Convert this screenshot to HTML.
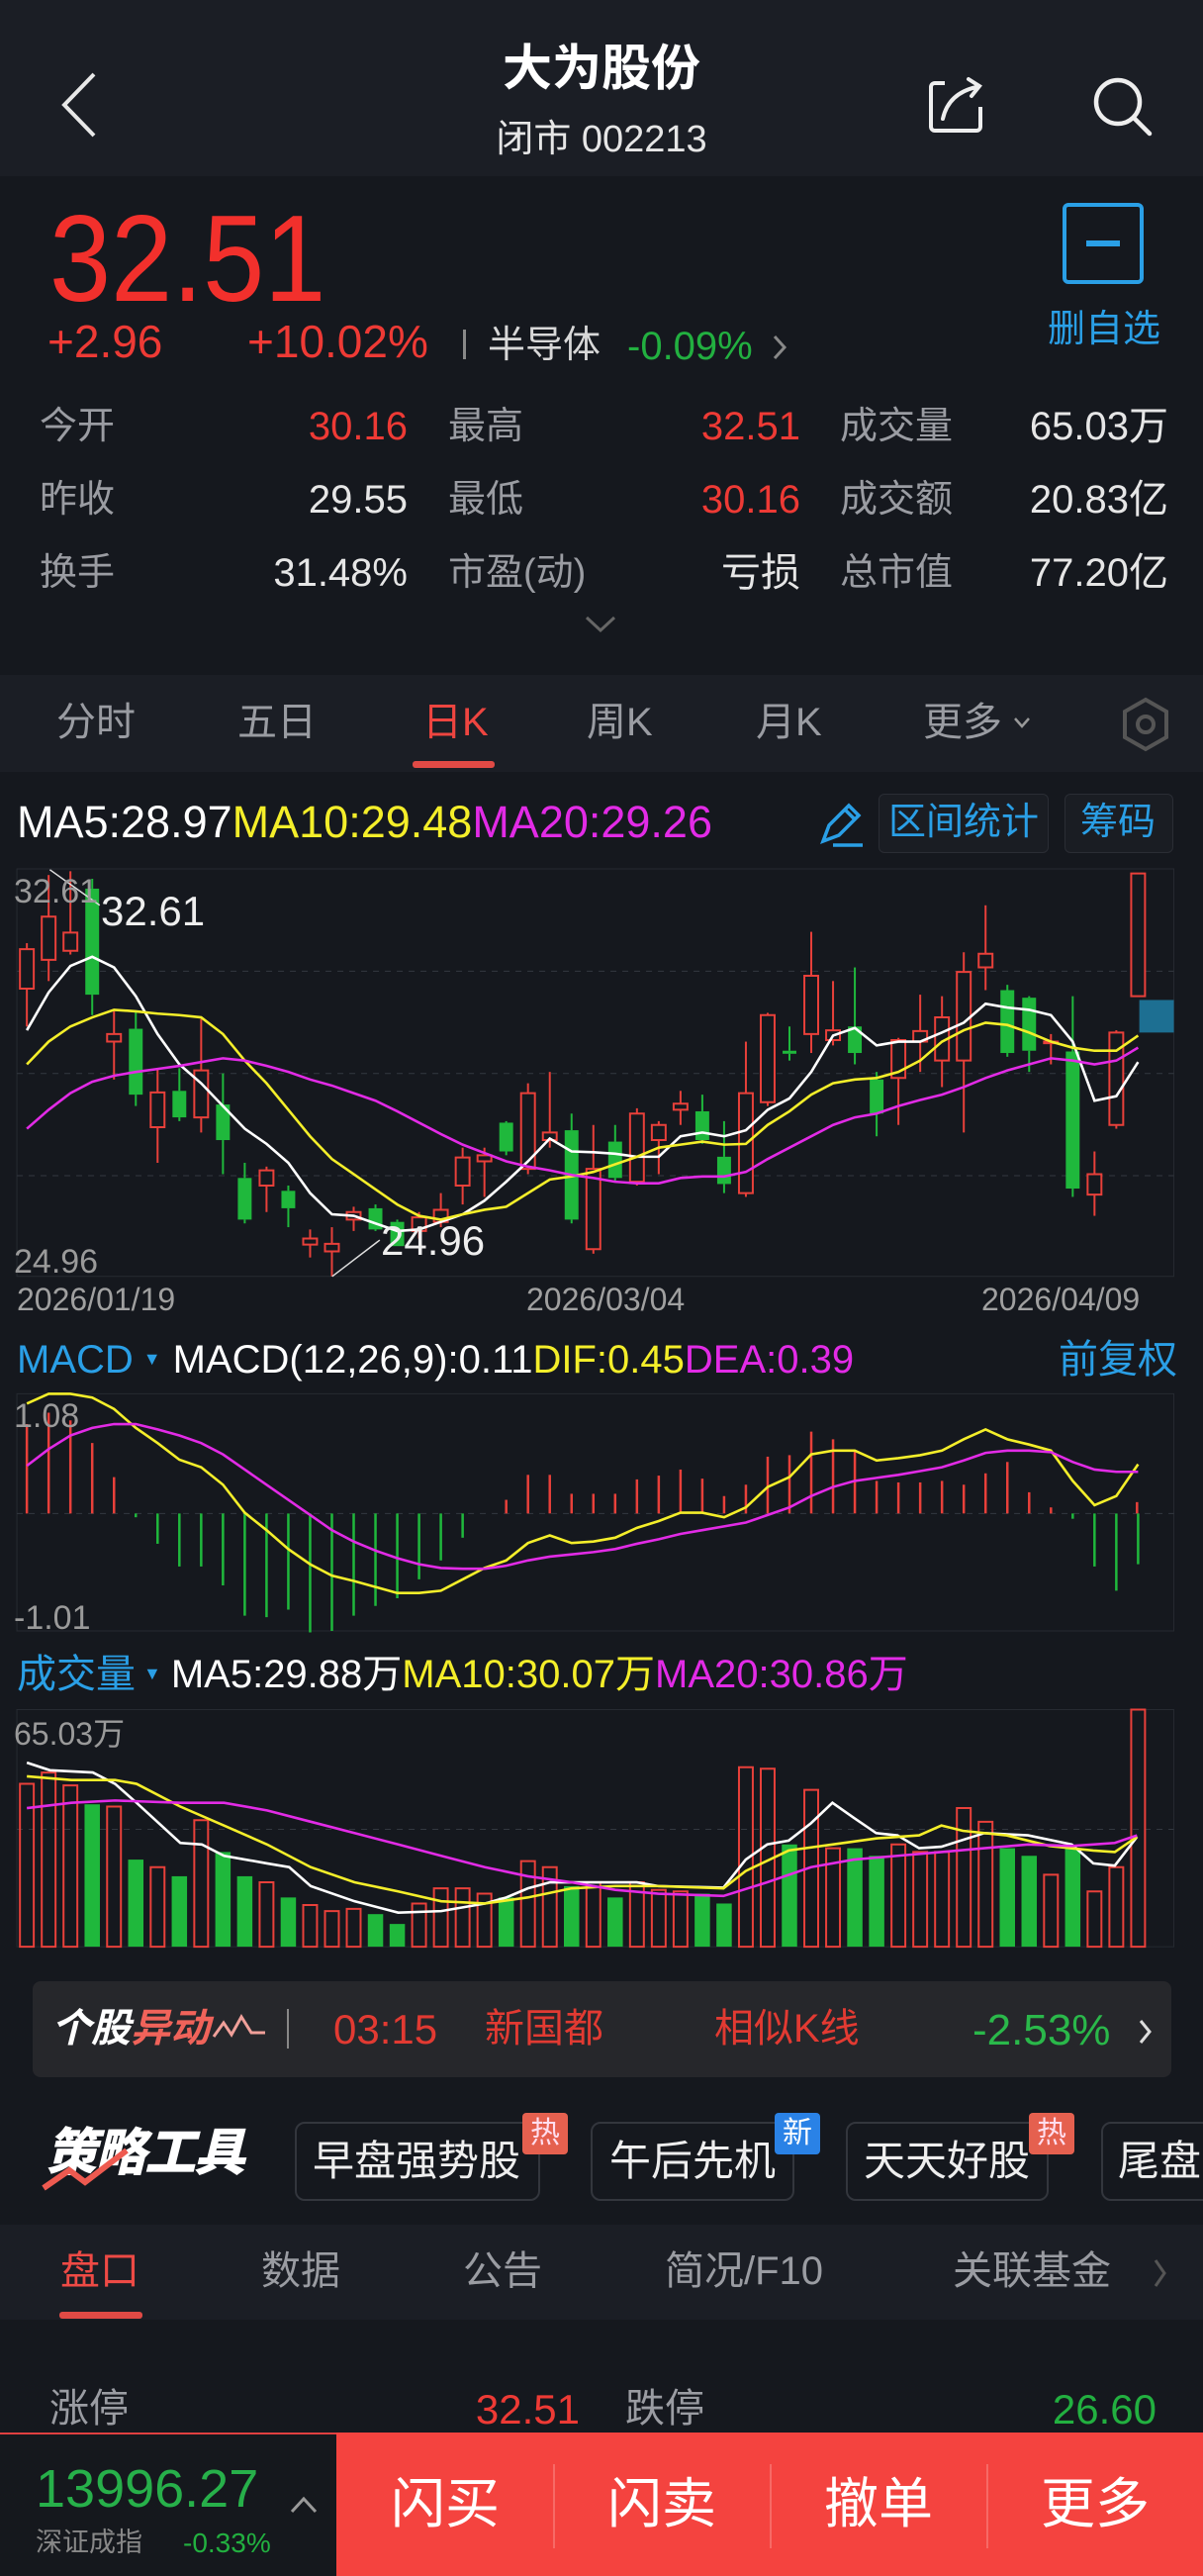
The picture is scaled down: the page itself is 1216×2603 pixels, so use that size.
<!DOCTYPE html>
<html><head><meta charset="utf-8">
<style>
*{margin:0;padding:0;box-sizing:border-box}
body{width:1216px;height:2603px;background:#15181e;position:relative;overflow:hidden;font-family:"Liberation Sans","Noto Sans CJK SC",sans-serif;color:#e6e6e6}
.a{position:absolute;white-space:nowrap;line-height:1}
.g{color:#9a9ca2}
.r{color:#ee3a35}
.gr{color:#22b040}
.b{color:#2a9fe6}
.num{display:inline-block;transform-origin:left center}
</style></head><body>
<!-- header -->
<div class="a" style="left:0;top:0;width:1216px;height:178px;background:#1b1e25"></div>
<svg class="a" style="left:55px;top:70px" width="50" height="72"><polyline points="40,5 10,36 40,67" fill="none" stroke="#e8e8e8" stroke-width="4"/></svg>
<div class="a" style="left:0;width:1216px;top:44px;text-align:center;font-size:50px;color:#fff;font-weight:bold">大为股份</div>
<div class="a" style="left:0;width:1216px;top:122px;text-align:center;font-size:38px;color:#e6e6e6">闭市 002213</div>
<svg class="a" style="left:935px;top:76px" width="65" height="62"><path d="M20 8 H10 a4 4 0 0 0 -4 4 V52 a4 4 0 0 0 4 4 H52 a4 4 0 0 0 4 -4 V32" fill="none" stroke="#eee" stroke-width="4"/><path d="M18 44 C22 26 34 16 52 12 M44 4 L55 11 L47 21" fill="none" stroke="#eee" stroke-width="4" stroke-linecap="round"/></svg>
<svg class="a" style="left:1100px;top:72px" width="70" height="70"><circle cx="30" cy="31" r="22" fill="none" stroke="#eee" stroke-width="4.5"/><line x1="46" y1="47" x2="62" y2="63" stroke="#eee" stroke-width="4.5" stroke-linecap="round"/></svg>

<!-- price -->
<div class="a r" style="left:50px;top:200px;font-size:124px;color:#f2302c"><span class="num" style="transform:scaleX(.9)">32.51</span></div>
<div class="a r" style="left:48px;top:322px;font-size:46px">+2.96</div>
<div class="a r" style="left:250px;top:322px;font-size:46px">+10.02%</div>
<div class="a" style="left:468px;top:333px;width:3px;height:30px;background:#888"></div>
<div class="a" style="left:493px;top:330px;font-size:38px;color:#d8d8d8">半导体</div>
<div class="a gr" style="left:634px;top:330px;font-size:40px">-0.09%</div>
<svg class="a" style="left:778px;top:336px" width="20" height="30"><polyline points="5,4 15,15 5,26" fill="none" stroke="#888" stroke-width="3"/></svg>
<svg class="a" style="left:1073px;top:204px" width="84" height="84"><rect x="3" y="3" width="78" height="78" rx="4" fill="none" stroke="#2a9fe6" stroke-width="4"/><rect x="25" y="39" width="34" height="6" fill="#2a9fe6"/></svg>
<div class="a b" style="left:1059px;top:314px;font-size:38px">删自选</div>

<!-- stats -->
<div class="a g" style="left:40px;top:411px;font-size:38px;line-height:40px">今开<br><span style="display:block;height:34px"></span>昨收<br><span style="display:block;height:34px"></span>换手</div>
<div class="a" style="left:200px;width:212px;text-align:right;top:411px;font-size:40px;line-height:40px"><span class="r">30.16</span><br><span style="display:block;height:34px"></span>29.55<br><span style="display:block;height:34px"></span>31.48%</div>
<div class="a g" style="left:453px;top:411px;font-size:38px;line-height:40px">最高<br><span style="display:block;height:34px"></span>最低<br><span style="display:block;height:34px"></span>市盈(动)</div>
<div class="a" style="left:600px;width:209px;text-align:right;top:411px;font-size:40px;line-height:40px"><span class="r">32.51</span><br><span style="display:block;height:34px"></span><span class="r">30.16</span><br><span style="display:block;height:34px"></span>亏损</div>
<div class="a g" style="left:849px;top:411px;font-size:38px;line-height:40px">成交量<br><span style="display:block;height:34px"></span>成交额<br><span style="display:block;height:34px"></span>总市值</div>
<div class="a" style="left:960px;width:221px;text-align:right;top:411px;font-size:40px;line-height:40px">65.03万<br><span style="display:block;height:34px"></span>20.83亿<br><span style="display:block;height:34px"></span>77.20亿</div>
<svg class="a" style="left:590px;top:620px" width="34" height="22"><polyline points="3,4 17,17 31,4" fill="none" stroke="#666" stroke-width="3"/></svg>

<!-- period tabs -->
<div class="a" style="left:0;top:682px;width:1216px;height:98px;background:#1b1e25"></div>
<div class="a g" style="left:57px;top:710px;font-size:40px">分时</div>
<div class="a g" style="left:240px;top:710px;font-size:40px">五日</div>
<div class="a" style="left:427px;top:710px;font-size:40px;color:#ee4540">日K</div>
<div class="a" style="left:417px;top:769px;width:83px;height:7px;background:#e04a45;border-radius:3px"></div>
<div class="a g" style="left:593px;top:710px;font-size:40px">周K</div>
<div class="a g" style="left:764px;top:710px;font-size:40px">月K</div>
<div class="a g" style="left:933px;top:710px;font-size:40px">更多</div>
<svg class="a" style="left:1023px;top:722px" width="20" height="16"><polyline points="3,4 10,12 17,4" fill="none" stroke="#999" stroke-width="2.5"/></svg>
<svg class="a" style="left:1133px;top:704px" width="50" height="56"><polygon points="25,3 46,15 46,41 25,53 4,41 4,15" fill="none" stroke="#555" stroke-width="4"/><circle cx="25" cy="28" r="8" fill="none" stroke="#555" stroke-width="4"/></svg>

<!-- MA row -->
<div class="a" style="left:17px;top:808px;font-size:45px"><span style="color:#fff">MA5:28.97</span><span style="color:#f4ee2a">MA10:29.48</span><span style="color:#e22be6">MA20:29.26</span></div>
<svg class="a" style="left:824px;top:808px" width="50" height="52"><path d="M8 42 L14 26 L34 6 L44 16 L24 36 Z M30 10 L40 20" fill="none" stroke="#2a9fe6" stroke-width="3.5"/><line x1="18" y1="46" x2="48" y2="46" stroke="#2a9fe6" stroke-width="3.5"/></svg>
<div class="a" style="left:888px;top:802px;width:172px;height:60px;border:1px solid #2a2d34;border-radius:6px;background:#1a1d23"></div>
<div class="a b" style="left:898px;top:812px;font-size:38px">区间统计</div>
<div class="a" style="left:1076px;top:802px;width:110px;height:60px;border:1px solid #2a2d34;border-radius:6px;background:#1a1d23"></div>
<div class="a b" style="left:1092px;top:812px;font-size:38px">筹码</div>

<!-- charts svg (zoom coords) -->
<svg id="ch" class="a" style="left:0;top:800px" width="1216" height="1200" viewBox="0 0 1568 1568" preserveAspectRatio="none"></svg>

<!-- chart labels -->
<div class="a" style="left:14px;top:884px;font-size:34px;color:#9a9a9a">32.61</div>
<div class="a" style="left:102px;top:900px;font-size:42px;color:#eee">32.61</div>
<div class="a" style="left:14px;top:1258px;font-size:34px;color:#9a9a9a">24.96</div>
<div class="a" style="left:385px;top:1233px;font-size:42px;color:#eee">24.96</div>
<div class="a" style="left:17px;top:1297px;font-size:32px;color:#a0a0a0">2026/01/19</div>
<div class="a" style="left:532px;top:1297px;font-size:32px;color:#a0a0a0">2026/03/04</div>
<div class="a" style="left:992px;top:1297px;font-size:32px;color:#a0a0a0">2026/04/09</div>

<div class="a" style="left:17px;top:1354px;font-size:40px"><span class="b">MACD</span><span style="font-size:18px;color:#2a9fe6;margin:0 12px 0 10px;vertical-align:8px">▼</span><span style="color:#fff">MACD(12,26,9):0.11</span><span style="color:#f4ee2a">DIF:0.45</span><span style="color:#e22be6">DEA:0.39</span></div>
<div class="a b" style="left:1070px;top:1354px;font-size:40px">前复权</div>
<div class="a" style="left:14px;top:1414px;font-size:34px;color:#9a9a9a">1.08</div>
<div class="a" style="left:14px;top:1618px;font-size:34px;color:#9a9a9a">-1.01</div>

<div class="a" style="left:17px;top:1672px;font-size:40px"><span class="b">成交量</span><span style="font-size:18px;color:#2a9fe6;margin:0 10px 0 8px;vertical-align:8px">▼</span><span style="color:#fff">MA5:29.88万</span><span style="color:#f4ee2a">MA10:30.07万</span><span style="color:#e22be6">MA20:30.86万</span></div>
<div class="a" style="left:14px;top:1736px;font-size:32px;color:#9a9a9a">65.03万</div>

<!-- anomaly bar -->
<div class="a" style="left:33px;top:2002px;width:1151px;height:97px;background:#26272b;border-radius:8px"></div>
<div class="a" style="left:52px;top:2030px;font-size:40px;font-weight:bold;font-style:italic;color:#fff">个股<span style="color:#f0635a">异动</span></div>
<svg class="a" style="left:214px;top:2034px" width="56" height="30"><polyline points="2,24 12,10 20,22 30,4 40,20 54,20" fill="none" stroke="#f0a09a" stroke-width="3"/></svg>
<div class="a" style="left:290px;top:2030px;width:2px;height:40px;background:#888"></div>
<div class="a" style="left:337px;top:2030px;font-size:42px;color:#e23a32">03:15</div>
<div class="a" style="left:490px;top:2030px;font-size:40px;color:#e23a32">新国都</div>
<div class="a" style="left:722px;top:2030px;font-size:40px;color:#e23a32">相似K线</div>
<div class="a" style="left:983px;top:2030px;font-size:44px;color:#2ab84a">-2.53%</div>
<svg class="a" style="left:1148px;top:2038px" width="20" height="30"><polyline points="5,4 14,15 5,26" fill="none" stroke="#ddd" stroke-width="3"/></svg>

<!-- strategy -->
<div class="a" style="left:46px;top:2150px;font-size:52px;font-weight:900;font-style:italic;color:#fff;letter-spacing:-2px">策略工具</div>
<svg class="a" style="left:40px;top:2165px" width="100" height="50"><polyline points="4,46 30,28 46,40 88,8" fill="none" stroke="#ee5a50" stroke-width="6"/></svg>
<div class="a" style="left:298px;top:2144px;width:248px;height:80px;border:2px solid #33363d;border-radius:10px"></div>
<div class="a" style="left:316px;top:2163px;font-size:42px;color:#eee">早盘强势股</div>
<div class="a" style="left:528px;top:2135px;width:46px;height:42px;background:#e5604f;border-radius:4px;font-size:30px;color:#fde;text-align:center;line-height:42px">热</div>
<div class="a" style="left:597px;top:2144px;width:206px;height:80px;border:2px solid #33363d;border-radius:10px"></div>
<div class="a" style="left:616px;top:2163px;font-size:42px;color:#eee">午后先机</div>
<div class="a" style="left:783px;top:2135px;width:46px;height:42px;background:#2a82e6;border-radius:4px;font-size:30px;color:#fff;text-align:center;line-height:42px">新</div>
<div class="a" style="left:855px;top:2144px;width:205px;height:80px;border:2px solid #33363d;border-radius:10px"></div>
<div class="a" style="left:873px;top:2163px;font-size:42px;color:#eee">天天好股</div>
<div class="a" style="left:1040px;top:2135px;width:46px;height:42px;background:#e5604f;border-radius:4px;font-size:30px;color:#fde;text-align:center;line-height:42px">热</div>
<div class="a" style="left:1113px;top:2144px;width:140px;height:80px;border:2px solid #33363d;border-radius:10px"></div>
<div class="a" style="left:1130px;top:2163px;font-size:42px;color:#eee">尾盘</div>

<!-- tabs 2 -->
<div class="a" style="left:0;top:2248px;width:1216px;height:96px;background:#1b1e25"></div>
<div class="a" style="left:61px;top:2275px;font-size:40px;color:#ee4a45">盘口</div>
<div class="a" style="left:60px;top:2336px;width:84px;height:7px;background:#e04a45;border-radius:3px"></div>
<div class="a g" style="left:264px;top:2275px;font-size:40px">数据</div>
<div class="a g" style="left:468px;top:2275px;font-size:40px">公告</div>
<div class="a g" style="left:672px;top:2275px;font-size:40px">简况/F10</div>
<div class="a g" style="left:963px;top:2275px;font-size:40px">关联基金</div>
<svg class="a" style="left:1163px;top:2280px" width="20" height="34"><polyline points="5,4 14,17 5,30" fill="none" stroke="#555" stroke-width="3"/></svg>

<div class="a g" style="left:50px;top:2414px;font-size:40px">涨停</div>
<div class="a r" style="left:400px;width:186px;text-align:right;top:2414px;font-size:42px">32.51</div>
<div class="a g" style="left:632px;top:2414px;font-size:40px">跌停</div>
<div class="a gr" style="left:980px;width:189px;text-align:right;top:2414px;font-size:42px">26.60</div>

<!-- bottom bar -->
<div class="a" style="left:0;top:2458px;width:340px;height:145px;background:#15181d;border-top:2px solid #e04040"></div>
<div class="a gr" style="left:36px;top:2488px;font-size:54px;color:#27b04a">13996.27</div>
<svg class="a" style="left:292px;top:2520px" width="30" height="22"><polyline points="3,18 15,5 27,18" fill="none" stroke="#999" stroke-width="3"/></svg>
<div class="a g" style="left:36px;top:2556px;font-size:27px;color:#888">深证成指</div>
<div class="a gr" style="left:185px;top:2556px;font-size:28px">-0.33%</div>
<div class="a" style="left:340px;top:2458px;width:876px;height:145px;background:#f4433f"></div>
<div class="a" style="left:559px;top:2490px;width:2px;height:85px;background:#f76a66"></div>
<div class="a" style="left:778px;top:2490px;width:2px;height:85px;background:#f76a66"></div>
<div class="a" style="left:997px;top:2490px;width:2px;height:85px;background:#f76a66"></div>
<div class="a" style="left:395px;top:2503px;font-size:55px;color:#fff">闪买</div>
<div class="a" style="left:614px;top:2503px;font-size:55px;color:#fff">闪卖</div>
<div class="a" style="left:833px;top:2503px;font-size:55px;color:#fff">撤单</div>
<div class="a" style="left:1052px;top:2503px;font-size:55px;color:#fff">更多</div>

<script>
(function(){
var s=document.getElementById('ch'),h='';
var R='#e8403a',G='#1fb83c';
function X(i){return 35+i*28.4;}
var vs='vector-effect="non-scaling-stroke"';
h+='<rect x="22" y="102" width="1508" height="538" fill="none" stroke="#262a31" '+vs+'/>';
h+='<rect x="22" y="795" width="1508" height="313" fill="none" stroke="#262a31" '+vs+'/>';
h+='<rect x="22" y="1212" width="1508" height="313" fill="none" stroke="#262a31" '+vs+'/>';
[237,372,507].forEach(function(y){h+='<line x1="22" x2="1530" y1="'+y+'" y2="'+y+'" stroke="#333840" stroke-dasharray="6 6" '+vs+'/>';});
h+='<line x1="22" x2="1530" y1="953" y2="953" stroke="#333840" stroke-dasharray="6 6" '+vs+'/>';
h+='<line x1="22" x2="1530" y1="1370" y2="1370" stroke="#333840" stroke-dasharray="6 6" '+vs+'/>';
var c=[[208,260,200,310,'r'],[165,222,110,250,'r'],[186,210,105,215,'r'],[128,268,115,295,'g'],[320,330,290,380,'r'],[313,400,290,415,'g'],[397,443,365,490,'r'],[395,430,365,435,'g'],[368,430,300,450,'r'],[413,460,372,505,'g'],[510,565,490,570,'g'],[500,520,495,555,'r'],[527,550,520,575,'g'],[590,598,578,615,'r'],[597,607,575,640,'r'],[555,565,548,580,'r'],[550,578,545,580,'g'],[568,600,565,600,'g'],[562,580,555,590,'r'],[552,568,530,575,'r'],[483,520,470,545,'r'],[480,488,470,535,'r'],[437,475,435,480,'g'],[398,498,385,505,'r'],[450,460,370,470,'r'],[447,565,425,570,'g'],[498,604,440,610,'r'],[462,510,440,515,'g'],[425,515,418,520,'r'],[440,460,435,505,'r'],[412,420,395,440,'r'],[422,460,400,465,'g'],[482,518,435,530,'g'],[398,530,330,535,'r'],[295,410,292,415,'r'],[342,346,310,355,'g'],[243,320,185,345,'r'],[315,328,250,335,'r'],[310,345,232,360,'g'],[380,425,370,455,'g'],[328,378,325,440,'r'],[316,330,268,370,'r'],[298,355,270,390,'r'],[238,355,212,450,'r'],[214,232,150,262,'r'],[262,345,255,350,'g'],[272,342,270,370,'g'],[330,332,320,360,'r'],[343,524,270,535,'g'],[505,532,475,560,'r'],[318,440,315,445,'r'],[108,270,108,270,'r']];
c.forEach(function(d,i){var x=X(i),col=d[4]=='r'?R:G;
 h+='<line x1="'+x+'" x2="'+x+'" y1="'+d[2]+'" y2="'+d[0]+'" stroke="'+col+'" stroke-width="2" '+vs+'/>';
 h+='<line x1="'+x+'" x2="'+x+'" y1="'+d[1]+'" y2="'+d[3]+'" stroke="'+col+'" stroke-width="2" '+vs+'/>';
 if(d[4]=='r')h+='<rect x="'+(x-9)+'" y="'+d[0]+'" width="18" height="'+Math.max(2,d[1]-d[0])+'" fill="#15181e" stroke="'+R+'" stroke-width="2" '+vs+'/>';
 else h+='<rect x="'+(x-9)+'" y="'+d[0]+'" width="18" height="'+Math.max(3,d[1]-d[0])+'" fill="'+G+'"/>';
});
h+='<rect x="1485" y="275" width="45" height="43" fill="#1d6f92"/>';
h+='<line x1="65" y1="103" x2="130" y2="150" stroke="#ddd" stroke-width="1.5" '+vs+'/>';
h+='<line x1="433" y1="640" x2="495" y2="592" stroke="#ddd" stroke-width="1.5" '+vs+'/>';
function pl(pts,col){h+='<polyline points="'+pts+'" fill="none" stroke="'+col+'" stroke-width="2.6" '+vs+'/>';}
function ser(arr){return arr.map(function(y,i){return X(i)+','+y;}).join(' ');}
pl(ser([315,265,230,218,232,270,320,360,385,415,445,465,490,530,558,560,570,580,578,568,558,540,515,488,458,475,476,478,482,482,455,450,455,447,420,405,370,322,312,335,330,330,318,305,280,285,288,295,330,408,402,357]),'#fff');
pl(ser([360,330,310,298,288,290,293,295,298,320,355,385,420,455,485,505,525,545,560,565,558,552,548,530,512,508,502,492,482,470,466,462,466,465,440,422,400,385,380,378,370,355,330,315,305,308,318,330,338,342,342,322]),'#f4ee2a');
pl(ser([445,420,398,383,375,370,366,362,357,352,355,362,370,380,388,398,408,422,437,452,466,477,488,495,500,506,510,515,517,517,510,508,508,502,485,470,455,440,430,425,415,407,400,390,378,368,360,352,355,360,355,338]),'#e22be6');
var m=[835,820,830,860,905,958,993,1023,1023,1048,1088,1090,1080,1110,1108,1088,1075,1065,1040,1015,985,953,935,902,902,927,927,927,908,903,895,907,930,915,878,876,845,855,870,910,912,912,910,915,900,885,925,945,960,1023,1055,1020];
m.forEach(function(y,i){var x=X(i);if(y==953)return;var col=y<953?R:G;h+='<line x1="'+x+'" x2="'+x+'" y1="953" y2="'+y+'" stroke="'+col+'" stroke-width="2.5" '+vs+'/>';});
h+='<line x1="1482" x2="1482" y1="953" y2="938" stroke="'+R+'" stroke-width="2.5" '+vs+'/>';
pl(ser([808,795,795,800,815,840,860,882,892,915,952,975,1000,1020,1035,1042,1050,1058,1058,1055,1040,1025,1015,992,982,992,990,985,972,963,952,952,958,945,918,905,875,870,870,883,880,876,870,855,842,855,862,870,910,942,930,888]),'#f4ee2a');
pl(ser([890,868,850,840,835,835,842,850,860,875,895,915,935,955,975,990,1002,1012,1020,1025,1026,1026,1022,1015,1010,1007,1004,1000,993,987,980,975,970,965,955,945,930,918,910,906,902,897,892,883,873,870,870,872,885,895,898,898]),'#e22be6');
var v=[[1310,'r'],[1295,'r'],[1312,'r'],[1337,'g'],[1340,'r'],[1410,'g'],[1420,'r'],[1432,'g'],[1358,'r'],[1400,'g'],[1432,'g'],[1440,'r'],[1460,'g'],[1470,'r'],[1478,'r'],[1475,'r'],[1482,'g'],[1495,'g'],[1468,'r'],[1448,'r'],[1448,'r'],[1455,'r'],[1460,'g'],[1412,'r'],[1420,'r'],[1445,'g'],[1440,'r'],[1460,'g'],[1440,'r'],[1450,'r'],[1452,'r'],[1455,'g'],[1468,'g'],[1288,'r'],[1290,'r'],[1390,'g'],[1318,'r'],[1395,'r'],[1395,'g'],[1405,'g'],[1390,'r'],[1400,'r'],[1400,'r'],[1342,'r'],[1360,'r'],[1395,'g'],[1405,'g'],[1430,'r'],[1395,'g'],[1452,'r'],[1420,'r'],[1212,'r']];
v.forEach(function(d,i){var x=X(i);if(d[1]=='r')h+='<rect x="'+(x-9)+'" y="'+d[0]+'" width="18" height="'+(1525-d[0])+'" fill="none" stroke="'+R+'" stroke-width="2" '+vs+'/>';else h+='<rect x="'+(x-10)+'" y="'+d[0]+'" width="20" height="'+(1525-d[0])+'" fill="'+G+'"/>';});
pl('35,1282 65,1292 121,1295 150,1310 178,1335 235,1388 263,1390 292,1405 348,1415 377,1420 405,1445 462,1465 519,1480 575,1478 632,1468 660,1460 688,1448 717,1440 773,1440 830,1440 858,1445 943,1447 972,1410 1000,1390 1028,1385 1057,1362 1085,1335 1113,1355 1142,1375 1170,1378 1198,1395 1227,1393 1283,1375 1340,1378 1397,1390 1425,1415 1453,1418 1482,1380','#fff');
pl('35,1300 93,1305 150,1305 178,1310 235,1340 292,1365 348,1390 405,1420 462,1440 519,1452 575,1465 632,1468 688,1460 745,1448 802,1445 858,1445 943,1448 972,1425 1028,1398 1085,1390 1142,1382 1198,1378 1227,1365 1255,1372 1312,1378 1368,1392 1425,1398 1453,1400 1482,1380','#f4ee2a');
pl('35,1342 93,1335 150,1332 235,1335 292,1335 348,1345 405,1360 462,1375 519,1390 575,1405 632,1420 688,1432 745,1440 802,1450 858,1455 943,1458 1000,1440 1057,1420 1113,1410 1170,1405 1227,1400 1283,1395 1340,1390 1397,1392 1453,1388 1482,1378','#e22be6');
s.innerHTML=h;
})();
</script>
</body></html>
